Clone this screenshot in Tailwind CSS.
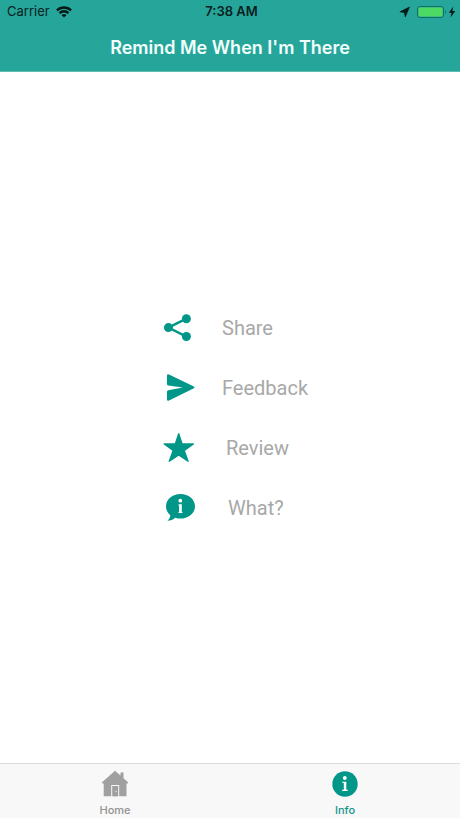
<!DOCTYPE html>
<html lang="en">
<head>
<meta charset="utf-8">
<meta name="viewport" content="width=device-width, initial-scale=1">
<title>Remind Me When I'm There</title>
<script src="https://cdn.jsdelivr.net/npm/@tailwindcss/browser@4"></script>
</head>
<body class="min-h-screen flex flex-col bg-white font-['Inter',sans-serif]">
<header class="bg-[#26a69a] border-b border-[#5fbcb3]">
  <div class="grid grid-cols-3 items-center h-6 pl-[7px] pr-1 text-[13px] text-[#06201e]">
    <div class="flex items-center gap-1.5">
      <span>Carrier</span>
      <svg class="w-4 h-3" viewBox="0 0 16 12" fill="none" stroke="#051a18" stroke-width="2.3" aria-label="Wi-Fi"><path d="M.9 4.4a10.2 10.2 0 0 1 14.2 0M3.5 7.1a6.4 6.4 0 0 1 9 0"/><path d="M8 11.6 5.5 9.1a3.6 3.6 0 0 1 5 0z" fill="#051a18" stroke="none"/></svg>
    </div>
    <span class="text-center font-semibold">7:38 AM</span>
    <div class="flex items-center justify-end gap-1">
      <svg class="w-3 h-3" viewBox="0 0 12 12" fill="#051a18" stroke="#051a18" stroke-width=".6" stroke-linejoin="round" aria-label="Location"><path d="M10.500 1 6.300 11 5.300 6.600.9 5.800z"/></svg>
      <svg class="w-8 h-3.5 ml-px" viewBox="0 0 32 14" aria-label="Battery"><rect x="1.500" y="1.500" width="26" height="11" rx="2.500" fill="none" stroke="#127067"/><rect x="2.500" y="2.500" width="24" height="9" rx="1.200" fill="#4cd964"/><path d="M29 5q2 2 0 4z" fill="#127067"/></svg>
      <svg class="w-2 h-3 -ml-1" viewBox="0 0 8 12" fill="#051a18" aria-label="Charging"><path d="M5.200.5.800 6.700h2.700L2.500 11.500 7.300 5H4.400z"/></svg>
    </div>
  </div>
  <h1 class="h-[47px] text-center text-lg leading-[47px] font-semibold text-[#f2fffd]">Remind Me When I'm There</h1>
</header>
<main class="flex-1 flex flex-col items-center justify-center pt-px font-['Roboto',sans-serif] text-xl font-normal text-[#a8a8a8]">
  <button class="flex items-center gap-6 h-[60px] w-[152px] whitespace-nowrap">
    <svg class="w-11 h-11 shrink-0" viewBox="0 0 44 44" fill="#009688" aria-hidden="true"><path d="M32.4 12.6 14.4 21.6 32.4 30.6" fill="none" stroke="#009688" stroke-width="2.4"/><circle cx="14.4" cy="21.6" r="4.5"/><circle cx="32.4" cy="12.7" r="4.5"/><circle cx="32.4" cy="30.5" r="4.5"/></svg>
    <span>Share</span>
  </button>
  <button class="flex items-center gap-6 h-[60px] w-[152px] whitespace-nowrap">
    <svg class="w-11 h-11 shrink-0" viewBox="0 0 44 44" fill="#009688" aria-hidden="true"><path d="M13 9.800q0-2 2-1.200L39.400 20.300q2 1.100 0 2.200L15 34.600q-2 .8-2-1.200v-7.700q0-1.100 1.200-1.500L28.800 21.400 14.200 19.400q-1.200-.2-1.200-1.300z"/></svg>
    <span>Feedback</span>
  </button>
  <button class="flex items-center gap-7 h-[60px] w-[152px] whitespace-nowrap">
    <svg class="w-11 h-11 shrink-0" viewBox="0 0 44 44" fill="#009688" stroke="#009688" stroke-width="1.300" stroke-linejoin="round" aria-hidden="true"><path d="m24.700 7.600 3.400 10.300h11.300l-9.100 6.700 3.800 10.700-9.400-6.400-9.400 6.400 3.800-10.700-8.900-6.700h11.100z"/></svg>
    <span>Review</span>
  </button>
  <button class="flex items-center gap-[30px] h-[60px] w-[152px] whitespace-nowrap">
    <svg class="w-11 h-11 shrink-0" viewBox="0 0 44 44" aria-hidden="true"><path d="M26.500 8C18.600 8 12 13.300 12 20.300c0 3.700 1.700 6.700 4.300 8.900-.2 2.500-1.200 4.200-3 5.600 3.200 0 6-1 7.900-3 1.700.6 3.400.8 5.300.8C34.500 32.600 41 27.300 41 20.300S34.500 8 26.500 8z" fill="#009688"/><g fill="#fff"><circle cx="26.300" cy="14.700" r="1.900"/><path d="M24.500 18.300h3.300v7.800h.6v1h-3.900v-1h.6v-6.600h-.6z"/></g></svg>
    <span>What?</span>
  </button>
</main>
<nav class="grid grid-cols-2 h-[55px] border-t border-[#dcdcdc] bg-[#f8f8f8] text-[11px] font-medium">
  <a href="#home" class="flex flex-col items-center gap-1 pt-1.5 text-[#929292]">
    <svg class="w-7 h-7" viewBox="0 0 28 28" fill="#a0a0a0" aria-hidden="true"><path fill-rule="evenodd" d="M14 .8 19.500 5.500V2.600h3V8.200L27.300 12.400 26.600 13.600H25.500V26.200H18.200V15H10.200V26.200H2.700V13.600H1.500L.8 12.400zM11.200 16h6v10.200h-6z"/><path d="M12.300 17.100h3.900v9.100h-3.900z"/><circle cx="15" cy="21.600" r=".7" fill="#fff"/></svg>
    <span class="leading-4">Home</span>
  </a>
  <a href="#info" aria-current="page" class="flex flex-col items-center gap-1 pt-1.5 text-[#159588]">
    <svg class="w-7 h-7" viewBox="0 0 28 28" aria-hidden="true"><circle cx="14" cy="14" r="12.700" fill="#009688"/><g fill="#fff"><circle cx="13.800" cy="8" r="1.900"/><path d="M11.400 11.700h3.900v8h1.400v1.200h-5.500v-1.200h1.600v-6.700h-1.400z"/></g></svg>
    <span class="leading-4">Info</span>
  </a>
</nav>
</body>
</html>
